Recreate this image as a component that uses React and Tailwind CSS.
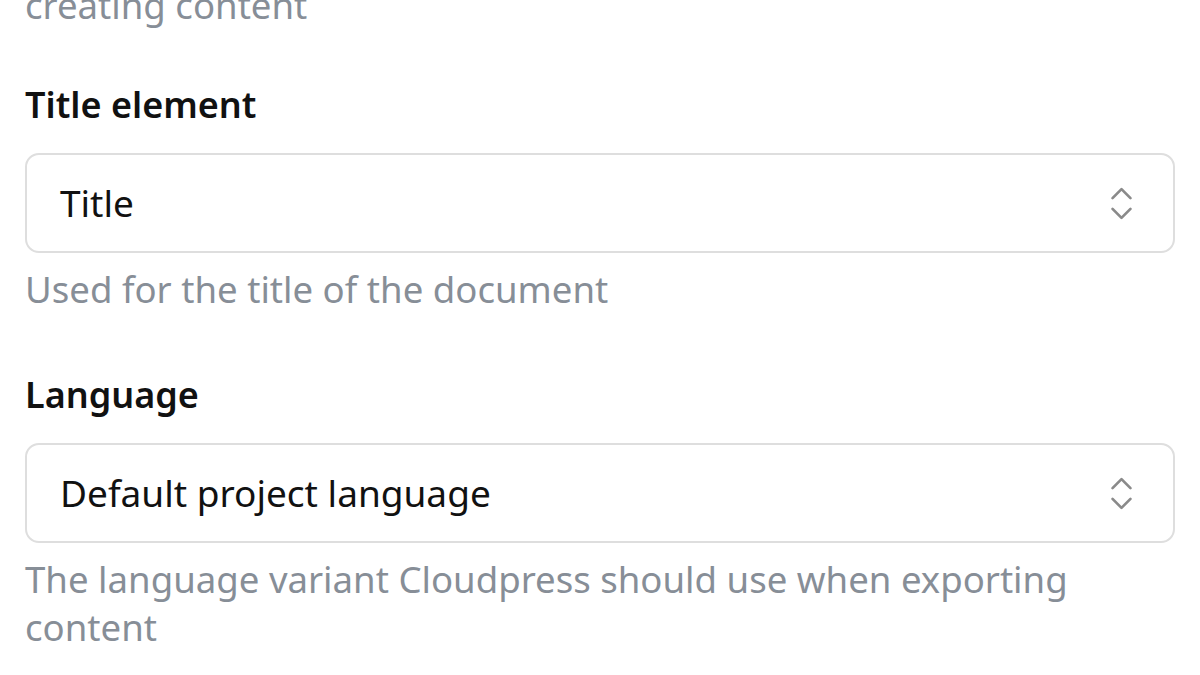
import { ChevronsUpDown } from "lucide-react";

const Field = ({ label, value, help }) => (
  <div className="flex flex-col">
    <label className="text-[36px] leading-[56px] font-semibold text-[#111]">{label}</label>
    <button
      type="button"
      className="mt-[20px] h-[100px] w-full flex items-center justify-between pl-[33px] pr-[30px] bg-white border-2 border-[#dedede] rounded-[14px] text-left"
    >
      <span className="text-[37px] text-[#111]">{value}</span>
      <ChevronsUpDown size={43} strokeWidth={1.5} className="text-[#8a8a8a]" />
    </button>
    <p className="mt-[12px] text-[36.6px] leading-[48px] text-[#878e97]">{help}</p>
  </div>
);

export default function App() {
  return (
    <div
      className="w-[1200px] h-[675px] overflow-hidden bg-white px-[25px]"
      style={{ fontFamily: '"Segoe UI", "Noto Sans", sans-serif' }}
    >
      <p className="-mt-[19px] text-[36.6px] leading-[48px] text-[#878e97]">creating content</p>
      <div className="mt-[48px] flex flex-col gap-[54px]">
        <Field
          label="Title element"
          value="Title"
          help="Used for the title of the document"
        />
        <Field
          label="Language"
          value="Default project language"
          help="The language variant Cloudpress should use when exporting content"
        />
      </div>
    </div>
  );
}
